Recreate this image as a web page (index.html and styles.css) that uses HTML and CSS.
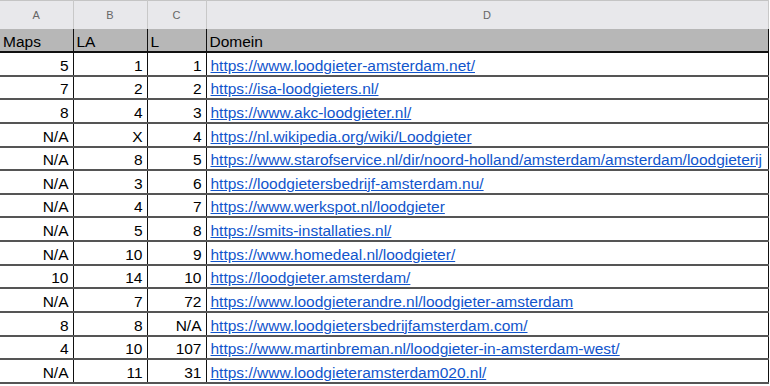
FILE: index.html
```html
<!DOCTYPE html>
<html>
<head>
<meta charset="utf-8">
<link rel="stylesheet" href="styles.css">
</head>
<body>
<table class="sheet">
  <colgroup>
    <col class="c-a"><col class="c-b"><col class="c-c"><col class="c-d">
  </colgroup>
  <thead>
    <tr class="letters">
      <th>A</th><th>B</th><th>C</th><th>D</th>
    </tr>
    <tr class="head">
      <th>Maps</th><th>LA</th><th>L</th><th>Domein</th>
    </tr>
  </thead>
  <tbody>
    <tr><td class="num">5</td><td class="num">1</td><td class="num">1</td><td><a href="#">https://www.loodgieter-amsterdam.net/</a></td></tr>
    <tr><td class="num">7</td><td class="num">2</td><td class="num">2</td><td><a href="#">https://isa-loodgieters.nl/</a></td></tr>
    <tr><td class="num">8</td><td class="num">4</td><td class="num">3</td><td><a href="#">https://www.akc-loodgieter.nl/</a></td></tr>
    <tr><td class="num">N/A</td><td class="num">X</td><td class="num">4</td><td><a href="#">https://nl.wikipedia.org/wiki/Loodgieter</a></td></tr>
    <tr><td class="num">N/A</td><td class="num">8</td><td class="num">5</td><td><a href="#">https://www.starofservice.nl/dir/noord-holland/amsterdam/amsterdam/loodgieterij</a></td></tr>
    <tr><td class="num">N/A</td><td class="num">3</td><td class="num">6</td><td><a href="#">https://loodgietersbedrijf-amsterdam.nu/</a></td></tr>
    <tr><td class="num">N/A</td><td class="num">4</td><td class="num">7</td><td><a href="#">https://www.werkspot.nl/loodgieter</a></td></tr>
    <tr><td class="num">N/A</td><td class="num">5</td><td class="num">8</td><td><a href="#">https://smits-installaties.nl/</a></td></tr>
    <tr><td class="num">N/A</td><td class="num">10</td><td class="num">9</td><td><a href="#">https://www.homedeal.nl/loodgieter/</a></td></tr>
    <tr><td class="num">10</td><td class="num">14</td><td class="num">10</td><td><a href="#">https://loodgieter.amsterdam/</a></td></tr>
    <tr><td class="num">N/A</td><td class="num">7</td><td class="num">72</td><td><a href="#">https://www.loodgieterandre.nl/loodgieter-amsterdam</a></td></tr>
    <tr><td class="num">8</td><td class="num">8</td><td class="num">N/A</td><td><a href="#">https://www.loodgietersbedrijfamsterdam.com/</a></td></tr>
    <tr><td class="num">4</td><td class="num">10</td><td class="num">107</td><td><a href="#">https://www.martinbreman.nl/loodgieter-in-amsterdam-west/</a></td></tr>
    <tr><td class="num">N/A</td><td class="num">11</td><td class="num">31</td><td><a href="#">https://www.loodgieteramsterdam020.nl/</a></td></tr>
  </tbody>
</table>
</body>
</html>
```
FILE: styles.css
```css
html, body {
  margin: 0;
  padding: 0;
  background: #ffffff;
}

body {
  font-family: "Liberation Sans", Arial, sans-serif;
  width: 770px;
  height: 386px;
  overflow: hidden;
}

.sheet {
  border-collapse: collapse;
  table-layout: fixed;
  width: 768px;
}

.c-a { width: 73px; }
.c-b { width: 74px; }
.c-c { width: 59px; }
.c-d { width: 562px; }

.letters th {
  height: 28px;
  padding: 0;
  background: #e8e8eb;
  color: #666666;
  font-size: 11px;
  font-weight: normal;
  text-align: center;
  border-top: 1px solid #c4c4c4;
  border-right: 1px solid #c8c8c8;
  border-left: 1px solid #c8c8c8;
}

.letters th:first-child { border-left: none; }

.head { height: 23px; }

.head th {
  padding: 0 3px 1px;
  background: #b7b7b7;
  color: #000000;
  font-size: 15.5px;
  line-height: 17px;
  font-weight: normal;
  text-align: left;
  vertical-align: bottom;
  border-right: 1px solid #111111;
  border-left: 1px solid #111111;
  border-bottom: 2px solid #111111;
}

.head th:first-child { border-left: none; }

tbody tr { height: 23.65px; }

tbody td {
  padding: 0 4px 1px;
  font-size: 15.5px;
  line-height: 17px;
  color: #000000;
  vertical-align: bottom;
  white-space: nowrap;
  overflow: hidden;
  border-right: 1px solid #111111;
  border-left: 1px solid #111111;
  border-bottom: 2px solid #555555;
}

tbody td:first-child { border-left: none; }

td.num { text-align: right; }

td a {
  color: #1155cc;
  text-decoration: underline;
}
```
